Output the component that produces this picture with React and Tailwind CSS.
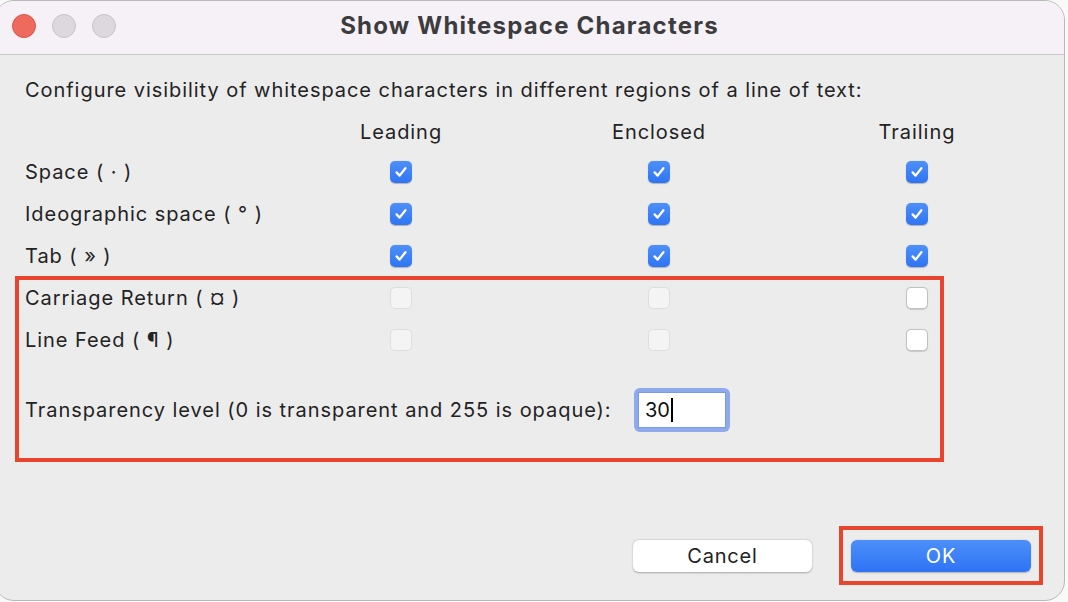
import React from 'react'

const font = { fontFamily: 'Inter, "Noto Sans", sans-serif' }

function Check({ state }) {
  // state: 'on' | 'off' | 'disabled'
  if (state === 'on') {
    return (
      <div className="w-[22px] h-[22px] rounded-[5px] bg-gradient-to-b from-[#4d90f9] to-[#2f74f3] flex items-center justify-center shadow-[0_0.5px_1px_rgba(0,0,0,0.25)]">
        <svg width="14" height="14" viewBox="0 0 14 14" fill="none">
          <path d="M2.6 7.4 L5.6 10.6 L11.4 3.2" stroke="white" strokeWidth="2.3" strokeLinecap="round" strokeLinejoin="round" />
        </svg>
      </div>
    )
  }
  if (state === 'off') {
    return <div className="w-[22px] h-[22px] rounded-[5px] bg-white border border-[#c2c2c2] shadow-[0_0.5px_1px_rgba(0,0,0,0.15)]" />
  }
  return <div className="w-[22px] h-[22px] rounded-[5px] bg-[#f4f4f4] border border-[#dedede]" />
}

function Row({ label, cells }) {
  return (
    <div className="grid grid-cols-[247px_258px_258px_258px] h-[42px] items-center">
      <div className="text-[20px] tracking-[0.95px] text-[#232323] leading-[24px] whitespace-nowrap">{label}</div>
      {cells.map((c, i) => (
        <div key={i} className="flex justify-center">
          <Check state={c} />
        </div>
      ))}
    </div>
  )
}

export default function App() {
  return (
    <div className="w-[1068px] h-[602px] bg-[#f9f9f9] overflow-hidden" style={font}>
      <div className="-ml-[6px] w-[1071px] h-[601px] rounded-[20px] border border-[#b9b9b9] bg-[#ececec] overflow-hidden flex flex-col">
        {/* title bar */}
        <div className="h-[54px] shrink-0 bg-[#f5f1f7] border-b border-[#c9c9c9] flex items-center relative pb-[3px]">
          <div className="flex items-center gap-[16px] pl-[17px]">
            <div className="w-[24px] h-[24px] rounded-full bg-[#ee6a5e] border border-[#d9574b]" />
            <div className="w-[24px] h-[24px] rounded-full bg-[#dcd8de] border border-[#c6c2c8]" />
            <div className="w-[24px] h-[24px] rounded-full bg-[#dcd8de] border border-[#c6c2c8]" />
          </div>
          <div className="absolute left-0 right-0 top-0 h-[50px] flex items-center justify-center">
            <span className="text-[24px] font-bold text-[#3c3c3e] tracking-[1.2px]">Show Whitespace Characters</span>
          </div>
        </div>

        {/* body */}
        <div className="flex-1 flex flex-col pl-[30px] pt-[23px]">
          <div className="text-[20px] tracking-[0.95px] text-[#232323] leading-[24px] whitespace-nowrap">
            Configure visibility of whitespace characters in different regions of a line of text:
          </div>
          <div className="grid grid-cols-[247px_258px_258px_258px] mt-[18px] h-[24px] items-center text-[20px] tracking-[0.95px] text-[#232323] leading-[24px]">
            <div />
            <div className="text-center">Leading</div>
            <div className="text-center">Enclosed</div>
            <div className="text-center">Trailing</div>
          </div>
          <div className="mt-[7px]">
            <Row label="Space ( · )" cells={['on', 'on', 'on']} />
            <Row label="Ideographic space ( ° )" cells={['on', 'on', 'on']} />
            <Row label="Tab ( » )" cells={['on', 'on', 'on']} />
          </div>

          {/* highlighted section */}
          <div className="-ml-[10px] -mt-[1px] w-[929px] h-[186px] border-[4px] border-[#e8442e] pl-[6px]">
            <div className="-mt-[3px]">
              <Row label="Carriage Return ( ¤ )" cells={['disabled', 'disabled', 'off']} />
              <Row label="Line Feed ( ¶ )" cells={['disabled', 'disabled', 'off']} />
            </div>
            <div className="flex items-center gap-[21px] mt-[27px] h-[44px]">
              <span className="w-[588px] text-[20px] tracking-[0.95px] text-[#232323] leading-[24px] whitespace-nowrap">
                Transparency level (0 is transparent and 255 is opaque):
              </span>
              <div className="w-[96px] h-[44px] rounded-[6px] bg-[#8ea9ec] p-[4px]">
                <div className="w-full h-full bg-white border border-[#7b9be0] flex items-center pl-[6px] text-[20px] text-[#111]">
                  30<span className="w-[2px] h-[24px] bg-black ml-[1px]" />
                </div>
              </div>
            </div>
          </div>

          {/* buttons */}
          <div className="flex items-center mt-[64px] pl-[608px]">
            <button className="w-[179px] h-[32px] rounded-[6px] bg-white text-[20px] tracking-[0.8px] text-[#222] shadow-[0_0.5px_2px_rgba(0,0,0,0.3)]">
              Cancel
            </button>
            <div className="ml-[27px] border-[4px] border-[#e8442e] px-[8px] pt-[10px] pb-[9px]">
              <button className="w-[180px] h-[32px] rounded-[6px] bg-gradient-to-b from-[#4c8ff9] to-[#2f73f5] text-[20px] tracking-[0.8px] text-white shadow-[0_0.5px_1.5px_rgba(0,0,0,0.25)]">
                OK
              </button>
            </div>
          </div>
        </div>
      </div>
    </div>
  )
}
